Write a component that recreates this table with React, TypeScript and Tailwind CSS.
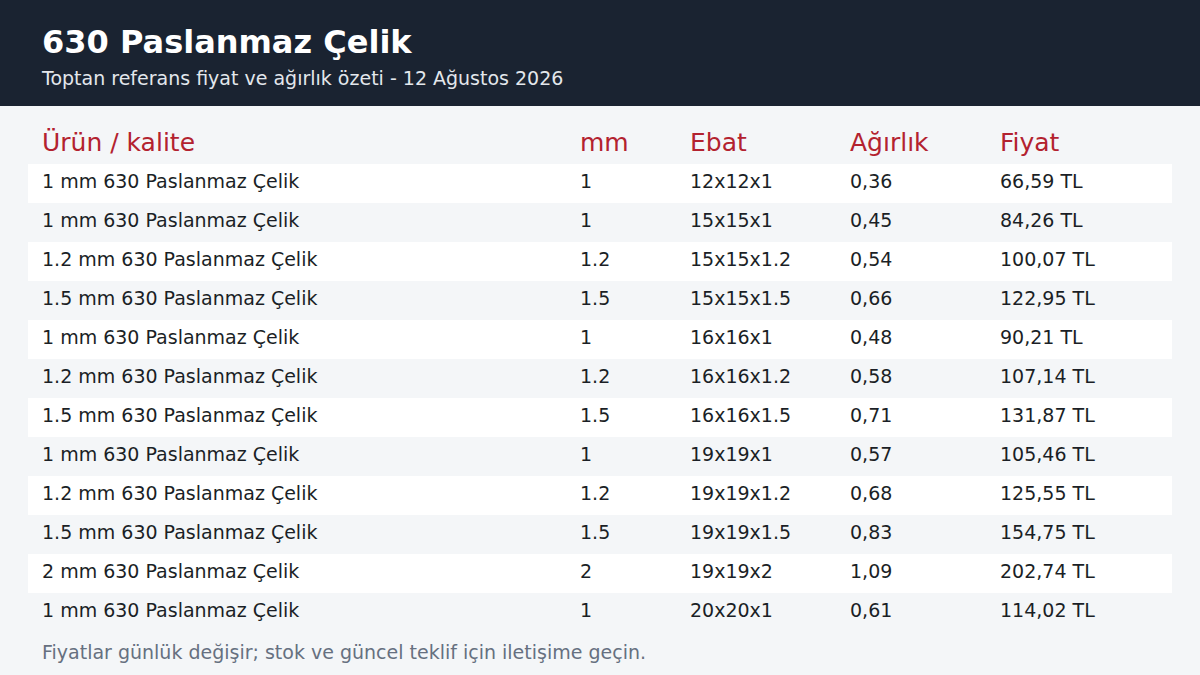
const rows: [string, string, string, string, string][] = [
  ["1 mm 630 Paslanmaz Çelik", "1", "12x12x1", "0,36", "66,59 TL"],
  ["1 mm 630 Paslanmaz Çelik", "1", "15x15x1", "0,45", "84,26 TL"],
  ["1.2 mm 630 Paslanmaz Çelik", "1.2", "15x15x1.2", "0,54", "100,07 TL"],
  ["1.5 mm 630 Paslanmaz Çelik", "1.5", "15x15x1.5", "0,66", "122,95 TL"],
  ["1 mm 630 Paslanmaz Çelik", "1", "16x16x1", "0,48", "90,21 TL"],
  ["1.2 mm 630 Paslanmaz Çelik", "1.2", "16x16x1.2", "0,58", "107,14 TL"],
  ["1.5 mm 630 Paslanmaz Çelik", "1.5", "16x16x1.5", "0,71", "131,87 TL"],
  ["1 mm 630 Paslanmaz Çelik", "1", "19x19x1", "0,57", "105,46 TL"],
  ["1.2 mm 630 Paslanmaz Çelik", "1.2", "19x19x1.2", "0,68", "125,55 TL"],
  ["1.5 mm 630 Paslanmaz Çelik", "1.5", "19x19x1.5", "0,83", "154,75 TL"],
  ["2 mm 630 Paslanmaz Çelik", "2", "19x19x2", "1,09", "202,74 TL"],
  ["1 mm 630 Paslanmaz Çelik", "1", "20x20x1", "0,61", "114,02 TL"],
];

const cols = "grid grid-cols-[538px_110px_160px_150px_187px]";

export default function App() {
  return (
    <div className="w-[1200px] h-[675px] bg-[#f4f6f8] overflow-hidden font-['DejaVu_Sans',sans-serif]">
      <header className="h-[106px] bg-[#1a2331] px-[42px] pt-[22px]">
        <h1 className="text-[32px] leading-[40px] font-bold text-white">630 Paslanmaz Çelik</h1>
        <p className="mt-[2px] text-[19px] leading-[28px] text-[#e3e7ec]">
          Toptan referans fiyat ve ağırlık özeti - 12 Ağustos 2026
        </p>
      </header>

      <main className="px-[28px] pt-[16px]">
        <div className={`${cols} h-[42px] items-center text-[25px] text-[#b3222f]`}>
          <div className="pl-[14px]">Ürün / kalite</div>
          <div className="pl-[14px]">mm</div>
          <div className="pl-[14px]">Ebat</div>
          <div className="pl-[14px]">Ağırlık</div>
          <div className="pl-[14px]">Fiyat</div>
        </div>
        <div>
          {rows.map((r, i) => (
            <div
              key={i}
              className={`${cols} h-[39px] pb-[5px] items-center text-[19px] text-[#1b1f26] ${i % 2 === 0 ? "bg-white" : ""}`}
            >
              {r.map((c, j) => (
                <div key={j} className="pl-[14px] whitespace-nowrap">{c}</div>
              ))}
            </div>
          ))}
        </div>
        <p className="pl-[14px] mt-[6px] text-[19px] leading-[28px] text-[#667080]">
          Fiyatlar günlük değişir; stok ve güncel teklif için iletişime geçin.
        </p>
      </main>
    </div>
  );
}
